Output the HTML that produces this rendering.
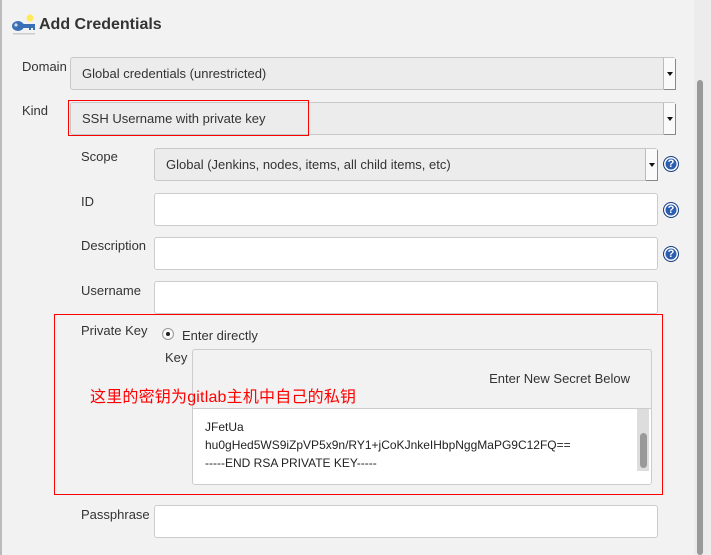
<!DOCTYPE html>
<html><head><meta charset="utf-8"><style>
body{margin:0;width:711px;height:555px;background:#f2f2f2;font-family:"Liberation Sans","Noto Sans CJK SC",sans-serif;font-size:13px;color:#333;position:relative;overflow:hidden}
.a{position:absolute}
.lbl{position:absolute;font-size:13px;color:#333}
.sel{position:absolute;background:#ececec;border:1px solid #c8c8c8;border-radius:3px;box-sizing:border-box;height:33px;line-height:31px;padding-left:11px;font-size:13px;color:#333}
.sel .arr{position:absolute;right:0;top:0;width:11px;height:31px;background:#fafafa;border-left:1px solid #bbb;box-shadow:1px 1px 0 #888}
.sel .arr:after{content:"";position:absolute;left:3px;top:14px;border:3px solid transparent;border-top:4px solid #111}
.inp{position:absolute;background:#fff;border:1px solid #ccc;border-radius:3px;box-sizing:border-box;height:33px}
.help{position:absolute;width:16px;height:16px;border-radius:50%;background:#2b5db0;border:1px solid #1a3f80;box-sizing:border-box;color:#fff;font-weight:bold;font-size:11px;text-align:center;line-height:14px;box-shadow:inset 0 0 0 1.5px #fff}
.red{position:absolute;border:1px solid #f00;box-sizing:border-box}
</style></head><body>
<div class="a" style="left:0;top:0;width:2px;height:555px;background:#bbb"></div>
<svg class="a" style="left:11px;top:13px" width="26" height="22" viewBox="0 0 26 22"><circle cx="19" cy="5" r="3.5" fill="#ffe94a" opacity=".9"/><ellipse cx="7" cy="13" rx="6" ry="5" fill="#3a6fb5"/><rect x="11" y="11" width="13" height="4" fill="#3a6fb5"/><rect x="18" y="14" width="2" height="3" fill="#3a6fb5"/><rect x="22" y="14" width="2" height="3" fill="#3a6fb5"/><circle cx="5" cy="12" r="1.6" fill="#cde"/><rect x="2" y="20" width="22" height="1.5" fill="#ccc"/></svg>
<div class="a" style="left:39px;top:16px;font-size:16px;font-weight:bold;color:#333">Add Credentials</div>

<div class="lbl" style="left:22px;top:59px">Domain</div>
<div class="sel" style="left:70px;top:57px;width:606px">Global credentials (unrestricted)<div class="arr"></div></div>
<div class="lbl" style="left:22px;top:103px">Kind</div>
<div class="sel" style="left:70px;top:102px;width:606px">SSH Username with private key<div class="arr"></div></div>
<div class="red" style="left:68px;top:100px;width:241px;height:36px"></div>

<div class="lbl" style="left:81px;top:149px">Scope</div>
<div class="sel" style="left:154px;top:148px;width:504px">Global (Jenkins, nodes, items, all child items, etc)<div class="arr"></div></div>
<div class="help" style="left:663px;top:156px">?</div>
<div class="lbl" style="left:81px;top:194px">ID</div>
<div class="inp" style="left:154px;top:193px;width:504px"></div>
<div class="help" style="left:663px;top:202px">?</div>
<div class="lbl" style="left:81px;top:238px">Description</div>
<div class="inp" style="left:154px;top:237px;width:504px"></div>
<div class="help" style="left:663px;top:246px">?</div>
<div class="lbl" style="left:81px;top:283px">Username</div>
<div class="inp" style="left:154px;top:281px;width:504px"></div>

<div class="red" style="left:54px;top:314px;width:609px;height:181px"></div>
<div class="lbl" style="left:81px;top:323px">Private Key</div>
<div class="a" style="left:162px;top:328px;width:12px;height:12px;border:1px solid #999;border-radius:50%;box-sizing:border-box;background:#f8f8f8"></div>
<div class="a" style="left:166px;top:332px;width:4px;height:4px;border-radius:50%;background:#222"></div>
<div class="lbl" style="left:182px;top:328px">Enter directly</div>
<div class="lbl" style="left:165px;top:350px">Key</div>
<div class="a" style="left:192px;top:349px;width:460px;height:136px;border:1px solid #ccc;border-radius:3px;box-sizing:border-box;background:#f2f2f2;overflow:hidden">
 <div class="a" style="right:21px;top:21px;font-size:13px">Enter New Secret Below</div>
 <div class="a" style="left:0;top:58px;width:458px;height:77px;background:#fff;border-top:1px solid #ccc">
  <div class="a" style="left:12px;top:9px;font-size:12px;line-height:18px;color:#222">JFetUa<br>hu0gHed5WS9iZpVP5x9n/RY1+jCoKJnkeIHbpNggMaPG9C12FQ==<br>-----END RSA PRIVATE KEY-----</div>
  <div class="a" style="right:2px;top:0;width:12px;height:62px;background:#ddd"></div>
  <div class="a" style="right:4px;top:24px;width:7px;height:35px;background:#999;border-radius:4px"></div>
 </div>
</div>
<div class="a" style="left:90px;top:383px;font-size:16px;color:#f00;letter-spacing:0.2px">这里的密钥为gitlab主机中自己的私钥</div>

<div class="lbl" style="left:81px;top:507px">Passphrase</div>
<div class="inp" style="left:154px;top:505px;width:504px"></div>

<div class="a" style="left:694px;top:0;width:17px;height:555px;background:#ececec"></div>
<div class="a" style="left:697px;top:80px;width:6px;height:475px;background:#999;border-radius:3px"></div>
</body></html>
